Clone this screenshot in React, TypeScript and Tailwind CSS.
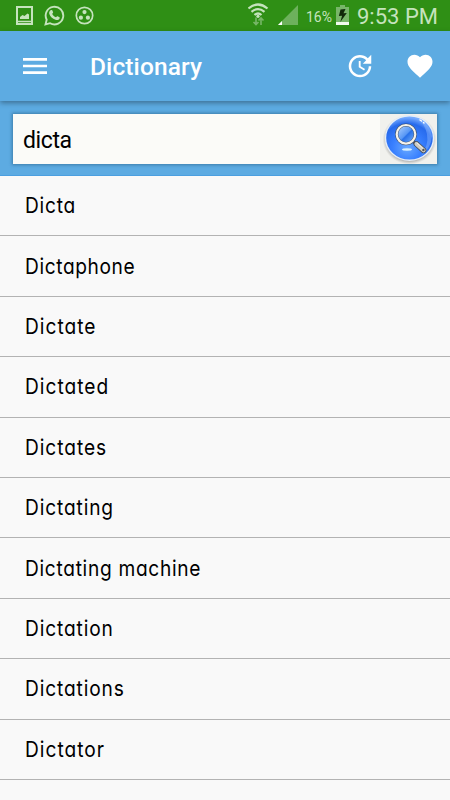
import { MdFavorite, MdMenu, MdUpdate } from "react-icons/md";

const WORDS = [
  { label: "Dicta", className: "tracking-[0.9px]" },
  { label: "Dictaphone", className: "tracking-[0.7px]" },
  { label: "Dictate", className: "tracking-[1.15px]" },
  { label: "Dictated", className: "tracking-[1.15px]" },
  { label: "Dictates", className: "tracking-[1.1px]" },
  { label: "Dictating", className: "tracking-[1px]" },
  { label: "Dictating machine", className: "tracking-[0.8px]" },
  { label: "Dictation", className: "tracking-[1px]" },
  { label: "Dictations", className: "tracking-[1px]" },
  { label: "Dictator", className: "tracking-[1.15px]" },
];

function StatusBar() {
  return (
    <div className="flex h-[31px] shrink-0 items-center bg-[#2f8f15] text-[#c5e3bd]">
      <svg className="ml-4 h-[31px] w-[17px]" viewBox="0 0 17 31" fill="none">
        <path d="M1 7h15v17H1z" stroke="currentColor" strokeWidth="2" />
        <path d="M4 19v-2l2.5-2 2 1 3-2.5 1.5 1V19z" fill="currentColor" />
        <path d="M2 21.5h13" stroke="currentColor" strokeWidth="1.5" />
      </svg>
      <svg className="ml-[11px] h-[21px] w-[21px]" viewBox="0 0 21 21" fill="none">
        <path d="M1.5 19.5l1.2-4.8a8.8 8.8 0 1 1 3.4 3.5z" stroke="currentColor" strokeWidth="1.9" />
        <path
          d="M7.2 5.1c.5-.2 1-.1 1.2.5l.7 1.7c.1.6-.5 1.1-.9 1.6.9 1.6 2.1 2.7 3.8 3.4.5-.5.9-1.4 1.6-1.1l1.9 1c.4.2.2 1.1 0 1.5-.7 1.4-2.4 1.7-4 1.1-3.1-1-5.3-3-6.3-6-.3-1.5.5-3.4 2-3.7z"
          fill="currentColor"
        />
      </svg>
      <svg className="ml-[10px] h-[19px] w-[19px]" viewBox="0 0 19 19" fill="none">
        <circle cx="9.5" cy="9.5" r="8.2" stroke="currentColor" strokeWidth="1.7" />
        <g fill="currentColor">
          <circle cx="9.5" cy="6.1" r="2.1" />
          <circle cx="5.9" cy="11.7" r="2.1" />
          <circle cx="12.9" cy="11.7" r="2.1" />
        </g>
      </svg>
      <svg className="ml-auto h-[31px] w-[24px]" viewBox="0 0 24 31" fill="none">
        <g stroke="currentColor" strokeWidth="2.2">
          <path d="M.5 8.5q9.5-8 19 0" />
          <path d="M3.5 11.8q6.5-5.5 13 0" />
          <path d="M6.5 15q3.5-3 7 0" />
        </g>
        <circle cx="10" cy="16.3" r="1.6" fill="currentColor" />
        <g stroke="#77b667" strokeWidth="1.6">
          <path d="M8 17.5v7M5.500 22l2.5 2.5 2.5-2.500M13 25v-7M10.5 20.5l2.5-2.5 2.5 2.5" />
        </g>
      </svg>
      <svg className="ml-[6px] mr-px h-[31px] w-[21px]" viewBox="0 0 21 31">
        <path d="M0 25L20 5v20z" fill="#6db15c" />
        <path d="M0 25l4-4v4z" fill="#fff" />
      </svg>
      <span className="ml-[6px] w-[27px] whitespace-nowrap pt-0.5 text-[14px] leading-none">16%</span>
      <svg className="ml-[3px] h-[31px] w-[14px]" viewBox="0 0 14 31">
        <path d="M4 5h5v2h4v18H0V7h4z" fill="#78b669" />
        <path d="M0 22h13v3H0z" fill="#f1fbed" />
        <path d="M4.5 9.5l5-.5-2 4.3 3.3-.3-6.5 9 1.8-6.3-3.2.3z" fill="#102909" />
      </svg>
      <span className="ml-[7px] mr-[12px] w-[81px] whitespace-nowrap pt-[3px] text-[22px] leading-none">
        9:53 PM
      </span>
    </div>
  );
}

function Toolbar() {
  return (
    <header className="relative flex h-[70px] shrink-0 items-center bg-[#5dabe2] text-white shadow-[0_2px_5px_rgba(0,0,0,0.35)]">
      <button type="button" aria-label="Open menu" className="ml-[19px]">
        <MdMenu className="h-8 w-8" />
      </button>
      <h1 className="ml-[39px] mt-0.5 text-[24.5px] font-medium leading-none tracking-[0.1px]">Dictionary</h1>
      <button type="button" aria-label="History" className="ml-auto">
        <MdUpdate className="h-[30px] w-[30px]" />
      </button>
      <button type="button" aria-label="Favorites" className="ml-[30px] mr-[15px]">
        <MdFavorite className="h-[30px] w-[30px]" />
      </button>
    </header>
  );
}

function SearchIcon() {
  return (
    <svg className="h-[50px] w-[57px]" viewBox="0 0 57 50" fill="none">
      <defs>
        <radialGradient id="ball" cx="45%" cy="72%" r="68%">
          <stop stopColor="#69a9ff" />
          <stop offset=".45" stopColor="#387fff" />
          <stop offset=".8" stopColor="#276aec" />
          <stop offset="1" stopColor="#75aaff" />
        </radialGradient>
        <linearGradient id="lens" x1="0" y1="0" x2="1" y2="1">
          <stop stopColor="#b9d7ff" />
          <stop offset=".5" stopColor="#5797f5" />
          <stop offset=".55" stopColor="#2870e8" />
          <stop offset="1" stopColor="#82bdff" />
        </linearGradient>
        <radialGradient id="shade">
          <stop offset=".82" stopColor="#777" stopOpacity=".7" />
          <stop offset="1" stopColor="#aaa" stopOpacity="0" />
        </radialGradient>
      </defs>
      <path d="M0 0h57v50H0z" fill="#f1f1ed" />
      <ellipse cx="29.5" cy="25.5" rx="27" ry="25" fill="url(#shade)" />
      <ellipse cx="29.5" cy="24" rx="24" ry="22.3" fill="url(#ball)" stroke="#e4edf8" strokeWidth="1.4" />
      <path d="M37 4q13 6 15 18-1 12-11 20 8-11 6-22Q45 10 37 4z" fill="#8bb9ff" opacity=".45" />
      <ellipse cx="27" cy="35.5" rx="5" ry="1.2" fill="#d8f0ff" />
      <path d="M33 27.5l3.5 3" stroke="#4d5360" strokeWidth="3" />
      <path d="M36.5 30l7 6.3" stroke="#444b53" strokeWidth="5.6" strokeLinecap="round" />
      <path d="M36.5 30l7 6.3" stroke="#cfcdc5" strokeWidth="4.2" strokeLinecap="round" />
      <path d="M37 29l6 5.5" stroke="#f3f1e8" strokeWidth="1" />
      <circle cx="43.4" cy="36" r="1.2" fill="#555" />
      <circle cx="26" cy="20.3" r="9.3" fill="url(#lens)" stroke="#40546f" strokeWidth="3.2" />
      <circle cx="26" cy="20.3" r="9.3" stroke="#f5f2ea" strokeWidth="2.2" />
      <path d="M40 6l1.5 1M43.5 8.5l.5.5" stroke="#fff" strokeWidth="1.4" strokeLinecap="round" />
    </svg>
  );
}

function SearchBox() {
  return (
    <div className="flex h-[75px] shrink-0 border-b border-[#4b9fe0] bg-[#5dabe2] pl-[13px] pt-[13px]">
      <div className="flex h-[50px] w-[424px] items-center justify-between bg-[#fbfbf8] shadow-[0_0_3px_1px_rgba(30,80,115,0.5)]">
        <span className="pl-[10px] pt-0.5 text-[23px] leading-none tracking-[-0.4px] text-black">dicta</span>
        <button type="button" aria-label="Search">
          <SearchIcon />
        </button>
      </div>
    </div>
  );
}

export default function App() {
  return (
    <div className="flex h-[800px] w-[450px] flex-col overflow-hidden bg-[#f9f9f9] font-['Roboto',sans-serif]">
      <StatusBar />
      <Toolbar />
      <SearchBox />
      <ul className="text-black">
        {WORDS.map(({ label, className }) => (
          <li key={label} className="flex h-[60.4px] items-center border-b border-[#b3b3b3] pl-[25px]">
            <span
              className={`-mt-px origin-left scale-x-[0.87] whitespace-nowrap font-['Inter',sans-serif] text-[22px] leading-none [font-feature-settings:'cv11'] ${className}`}>
              {label}
            </span>
          </li>
        ))}
      </ul>
    </div>
  );
}
